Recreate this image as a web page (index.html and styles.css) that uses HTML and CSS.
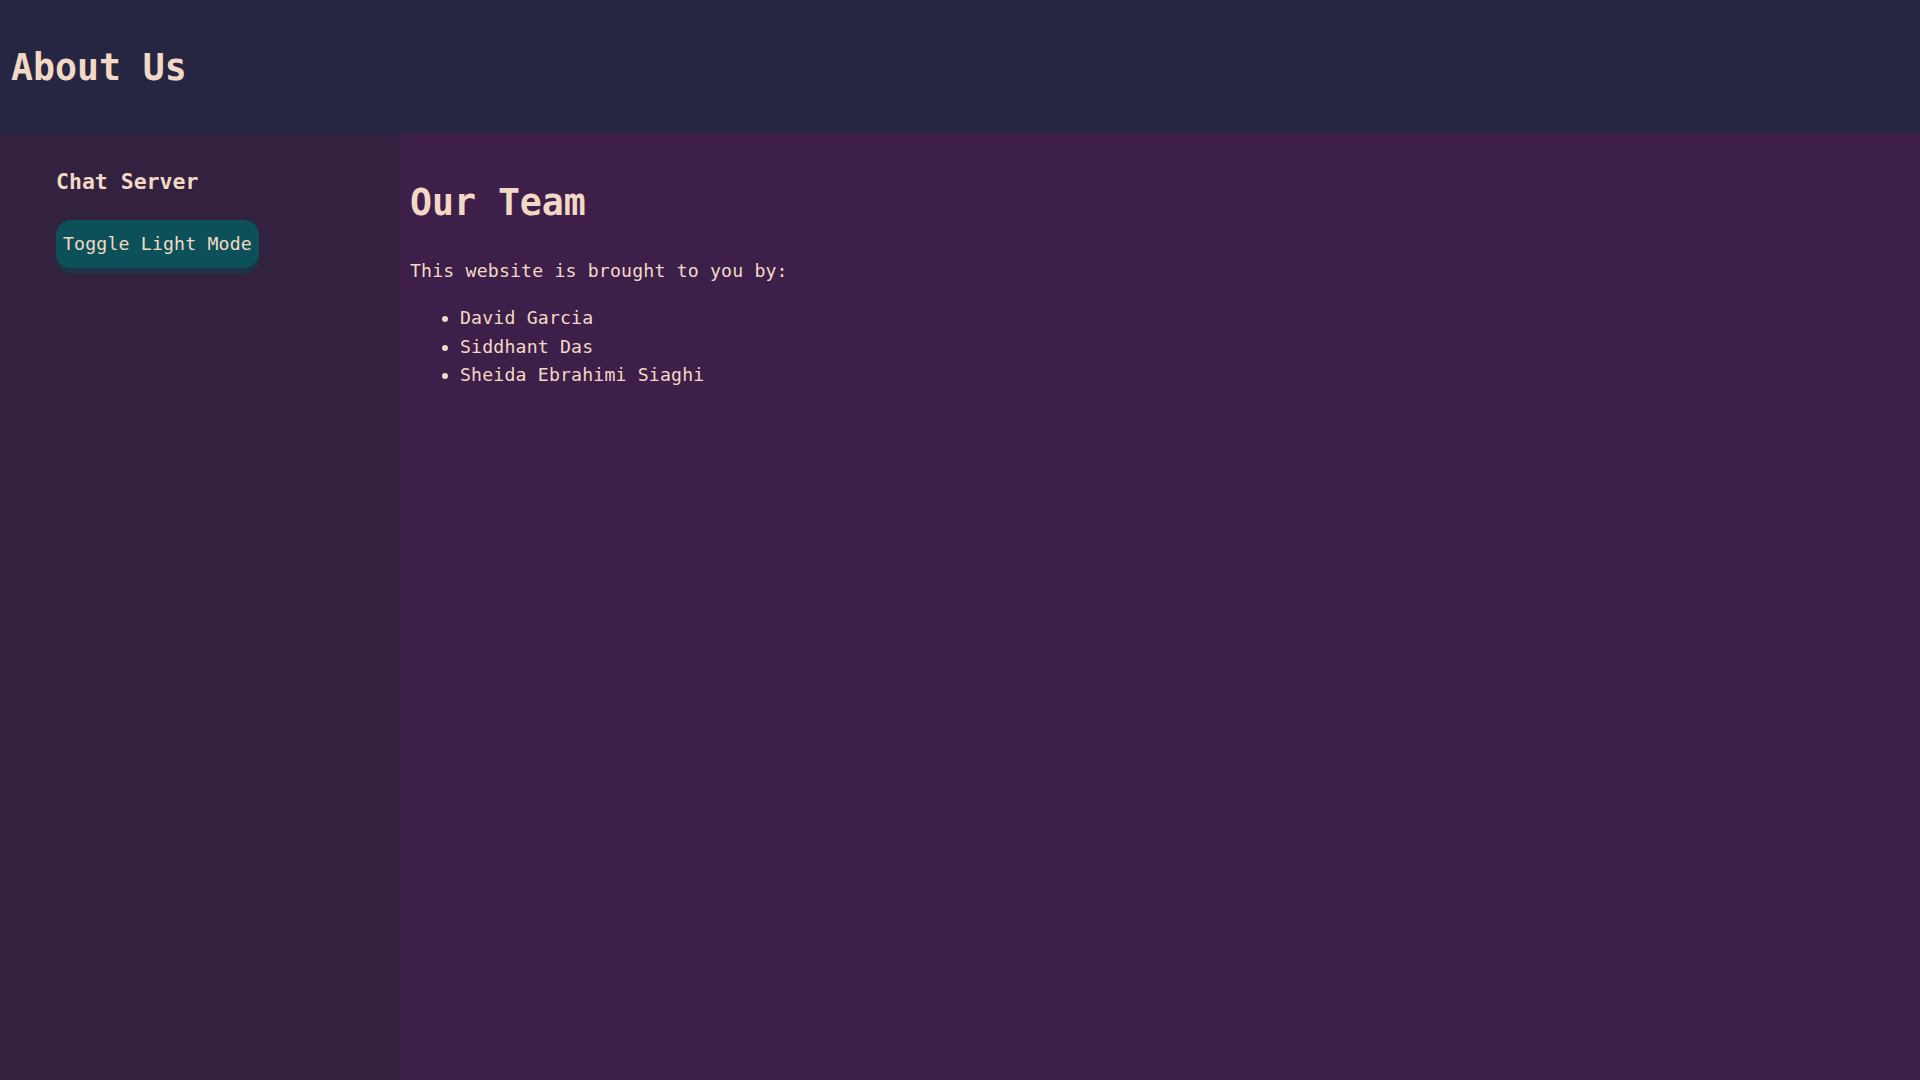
FILE: index.html
```html
<!DOCTYPE html>
<html lang="en">
<head>
<meta charset="utf-8">
<title>About Us</title>
<link rel="stylesheet" href="styles.css">
</head>
<body>
<header class="topbar">
  <h1 class="page-title">About Us</h1>
</header>
<div class="layout">
  <aside class="sidebar">
    <h3 class="brand">Chat Server</h3>
    <button class="toggle-btn" type="button">Toggle Light Mode</button>
  </aside>
  <main class="content">
    <h2 class="section-title">Our Team</h2>
    <p class="intro">This website is brought to you by:</p>
    <ul class="team-list">
      <li>David Garcia</li>
      <li>Siddhant Das</li>
      <li>Sheida Ebrahimi Siaghi</li>
    </ul>
  </main>
</div>
</body>
</html>
```

FILE: styles.css
```css
html, body {
  margin: 0;
  padding: 0;
}

body {
  font-family: "DejaVu Sans Mono", "Liberation Mono", monospace;
  color: #f2d9c5;
  background: #3e1f4a;
}

.topbar {
  height: 134px;
  background: #262642;
  display: flex;
  align-items: center;
  padding-left: 11px;
}

.page-title {
  margin: 0;
  font-size: 36.5px;
  font-weight: bold;
}

.layout {
  display: flex;
  min-height: calc(100vh + 22px);
}

.sidebar {
  width: 399px;
  flex: 0 0 399px;
  background: #32213f;
  padding-left: 56px;
  box-sizing: border-box;
}

.brand {
  margin: 34.6px 0 0 0;
  font-size: 21.5px;
  font-weight: bold;
}

.toggle-btn {
  margin-top: 26px;
  height: 48px;
  padding: 0 7px;
  border: none;
  border-radius: 15px;
  background: #0c5159;
  color: #f2d9c5;
  font-family: "DejaVu Sans Mono", "Liberation Mono", monospace;
  font-size: 18.2px;
  letter-spacing: 0.16px;
  box-shadow: 0 6px 0 #1f3348;
  cursor: pointer;
}

.content {
  flex: 1;
  padding-left: 11px;
}

.section-title {
  margin: 46.7px 0 0 0;
  font-size: 36.5px;
  font-weight: bold;
}

.intro {
  margin: 36.5px 0 0 0;
  font-size: 18.2px;
  letter-spacing: 0.16px;
}

.team-list {
  margin: 23px 0 0 0;
  padding-left: 50px;
  font-size: 18.2px;
  letter-spacing: 0.16px;
  line-height: 28.5px;
}
```
